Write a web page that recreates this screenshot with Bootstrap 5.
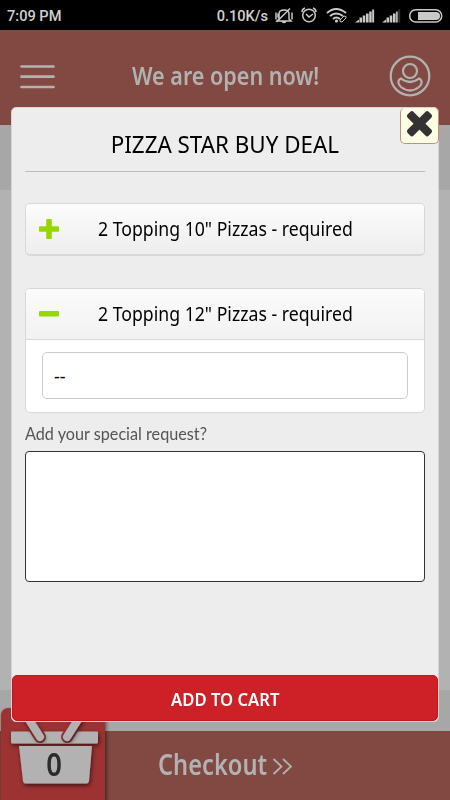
<!DOCTYPE html>
<html lang="en">
<head>
<meta charset="utf-8">
<meta name="viewport" content="width=device-width, initial-scale=1">
<title>Pizza Star Buy Deal</title>
<link href="https://cdn.jsdelivr.net/npm/bootstrap@5.3.0/dist/css/bootstrap.min.css" rel="stylesheet">
<style>
html, body { height: 100%; overflow: hidden; }
body { font-family: "Noto Sans", "Open Sans", sans-serif; background: #b2b2b2; color: #000; }
.screen { width: 450px; height: 800px; overflow: hidden; }
.statusbar { height: 30px; background: #000; color: #d0d0d0; font: 500 14.6px/30px Roboto, sans-serif; padding: 1px 6px 0 7px; }
.topbar { height: 95px; background: #814941; padding: 0 19px; }
.band-top { height: 65px; background: #a7a7a7; }
.band-mid { height: 500px; }
.band-bottom { height: 41px; background: #a7a7a7; }
.footbar { height: 69px; background: #814941; }
.squeeze { display: inline-block; white-space: nowrap; transform: scaleX(var(--sx, 1)); transform-origin: center; }
.open-text { font-size: 25px; font-weight: 600; color: #b2b2b2; line-height: 34px; --sx: .862; margin: 0 0 5px 6px; }
.deal { left: 11px; top: 107px; width: 428px; height: 615px; background: #ededed; border: 1px solid #d5d5d5; border-radius: 5px; padding: 0 13px; }
.deal-title { height: 64px; border-bottom: 1px solid #bfbfbf; padding-top: 19px; font-size: 23.5px; line-height: 34px; }
.deal-title .squeeze { --sx: .952; }
.close-btn { right: -1px; top: 0; width: 39px; height: 36px; background: #ffffe6; border: 1px solid #c98a80; border-top: 0; border-radius: 5px; }
.option { border: 1px solid #d8d8d8; border-radius: 5px; overflow: hidden; background: #fff; }
.option-head { height: 51px; background: linear-gradient(#fbfbfb, #f2f2f2); font-size: 19.5px; padding-left: 12.5px; }
.option-head .squeeze { --sx: .906; transform-origin: left; margin-left: 39px; }
.option-one { margin-top: 31px; height: 53px; border-bottom-width: 2px; }
.option-one .option-head { background: linear-gradient(#fcfcfc, #ededed); padding-bottom: 2px; }
.option-two { margin-top: 32px; height: 125px; }
.option-two .option-head { border-bottom: 1px solid #d8d8d8; }
.pick { margin: 12px 16px; height: 47px; width: 366px; border: 1.5px solid #ccc; border-radius: 5px; font-size: 18px; padding: 0 11px; line-height: 46px; }
.ask { margin-top: 9px; font: 16.5px/24px Lato, sans-serif; color: #555; }
.ask .squeeze { transform-origin: left; --sx: .982; }
.request { display: block; margin-top: 5px; width: 400px; height: 131px; background: #fff; border: 1px solid #333; border-radius: 4px; resize: none; }
.add-btn { left: 0; bottom: 0; width: 426px; height: 46px; background: #cd2027; border: 1px solid #c4151c; border-radius: 5px; color: #fff; font-size: 18.5px; font-weight: 600; line-height: 45px; }
.add-btn .squeeze { --sx: .9; }
.basket { left: 0; top: 707px; width: 110px; height: 93px; }
.count { left: 0; top: 736px; width: 109px; font-size: 31.5px; line-height: 55px; font-weight: 600; color: #2c2c2c; }
.count .squeeze { --sx: .87; }
.checkout { padding-left: 158px; color: #b2b2b2; font-size: 28px; font-weight: 600; }
.checkout .squeeze { transform-origin: left; --sx: .845; width: 114px; margin-bottom: 3px; }
</style>
<script src="https://cdn.jsdelivr.net/npm/bootstrap@5.3.0/dist/js/bootstrap.bundle.min.js"></script>
</head>
<body>
<div class="screen position-relative d-flex flex-column">
  <div class="statusbar d-flex justify-content-between">
    <span>7:09 PM</span>
    <div class="d-flex">
      <span>0.10K/s</span>
      <svg class="ms-1" width="172" height="28" viewBox="272 0 172 28" fill="none" stroke="#c9c9c9" stroke-width="1.500">
        <path d="M279 18V13q0-4 5-4t5 4v5l2 2h-14zM282 20q2 3 4 0M276.500 21 290 7.500M276 11.500v7M292 11.500v7M278 12.500v4"/>
        <circle cx="309" cy="14.500" r="6.300"/><path d="m306 13 3 3 4-3M302 11q0-3 3-4M316 11q0-3-3-4"/>
        <g stroke-width="2"><path d="M327 12q9-8 19 0M330 15q6-5 13 0M333 18q3-3 7 0"/></g><circle cx="336.500" cy="20" r="1.600" fill="#c9c9c9" stroke="none"/>
        <path d="m340 19 4-4q3 0 2 2l-4 4q-3 0-2-2z" stroke-width="1"/>
        <g fill="#c9c9c9" stroke="none"><path d="M355 21.500l4-3v3zM359.500 16.500h2.500v5h-2.500zM362.700 14.500h2.600v7h-2.600zM366 12.500h2.600v9H366zM369.200 10.500h2.500v11h-2.500zM372.200 8.500h1.900v13h-1.900zM382 21.500l4-3v3zM386.500 16.500h2.500v5h-2.500zM389.700 14.500h2.600v7h-2.600zM393 12.500h2.600v9H393zM396.100 10.500h1.600v11h-1.600z"/><path fill="#333" d="M398.200 8.500h2v13h-2z"/></g>
        <rect x="409.700" y="8.700" width="32" height="12.300" rx="6"/><path fill="#c9c9c9" stroke="none" d="M418 11h18q4 0 4 4t-4 4h-18z"/>
      </svg>
    </div>
  </div>
  <header class="topbar d-flex align-items-center justify-content-between">
    <svg class="mb-1" width="38" height="30" viewBox="0 0 38 30" stroke="#b2b2b2" stroke-width="2.700" stroke-linecap="round"><path d="M2.500 5.500h32M2.500 15.700h32M2.500 26h32"/></svg>
    <span class="open-text squeeze">We are open now!</span>
    <svg class="mb-1" width="42" height="42" viewBox="0 0 42 42" fill="none" stroke="#b2b2b2" stroke-width="2.200"><circle cx="21" cy="21" r="19.300"/><circle cx="21" cy="16" r="7"/><path d="M12 23.500q9 7 18 0c4 2 3 6 0 8.500q-9 7-18 0c-3-3-4-6.500 0-8.500z"/></svg>
  </header>
  <div class="band-top"></div>
  <div class="band-mid"></div>
  <div class="band-bottom"></div>
  <footer class="footbar checkout d-flex align-items-center">
    <span class="squeeze">Checkout</span>
    <svg width="20" height="18" viewBox="0 0 20 18" fill="none" stroke="#b2b2b2" stroke-width="1.800"><path d="m1.500 2 8 7.500-8 7.500M11 2l8 7.500-8 7.500"/></svg>
  </footer>

  <svg class="basket position-absolute" viewBox="0 707 110 93">
    <defs><filter id="soft" x="-20%" y="-20%" width="140%" height="150%"><feDropShadow dx="1" dy="2" stdDeviation="2" flood-color="#000" flood-opacity=".6"/></filter></defs>
    <path d="M1 805V716q0-8 8-8h96v97z" fill="#9c3133" filter="url(#soft)"/>
    <g fill="#b2b2b2" filter="url(#soft)">
      <path d="M12 731.500h85q1 0 1 1V742q0 1.500-1.500 1.500h-84q-1.500 0-1.500-1.500v-9.500q0-1 1-1zM19 746h73l-3 35q-.4 2.500-2.500 2.500h-61q-2.300 0-2.500-2.500z"/>
    </g>
    <path d="M28 718 40 737M79 718 67 737" stroke="#9c3133" stroke-width="12" stroke-linecap="round"/>
    <path d="M28 718 40 737M79 718 67 737" stroke="#b2b2b2" stroke-width="8" stroke-linecap="round" filter="url(#soft)"/>
  </svg>
  <div class="count position-absolute text-center"><span class="squeeze">0</span></div>

  <main class="deal position-absolute">
    <div class="deal-title text-center"><span class="squeeze">PIZZA STAR BUY DEAL</span></div>
    <button class="close-btn position-absolute p-0" aria-label="Close">
      <svg class="d-block mx-auto" width="37" height="35" viewBox="0 0 37 35" fill="#333" ><g transform="rotate(45 18.500 15.700)"><rect x="3.500" y="11.500" width="30" height="8.400" rx="2.500"/><rect x="14.300" y=".7" width="8.400" height="30" rx="2.500"/></g></svg>
    </button>
    <section class="option option-one">
      <div class="option-head d-flex align-items-center">
        <svg width="20" height="20" viewBox="0 0 20 20" fill="#97d700"><rect x="7.200" width="5.600" height="20" rx="1"/><rect y="7.200" width="20" height="5.600" rx="1"/></svg>
        <span class="squeeze">2 Topping 10" Pizzas - required</span>
      </div>
    </section>
    <section class="option option-two">
      <div class="option-head d-flex align-items-center">
        <svg width="20" height="20" viewBox="0 0 20 20" fill="#97d700"><rect y="7" width="20" height="5.600" rx="1"/></svg>
        <span class="squeeze">2 Topping 12" Pizzas - required</span>
      </div>
      <div class="pick">--</div>
    </section>
    <div class="ask"><span class="squeeze">Add your special request?</span></div>
    <textarea class="request" aria-label="Special request"></textarea>
    <button class="add-btn position-absolute p-0"><span class="squeeze">ADD TO CART</span></button>
  </main>
</div>
</body>
</html>
